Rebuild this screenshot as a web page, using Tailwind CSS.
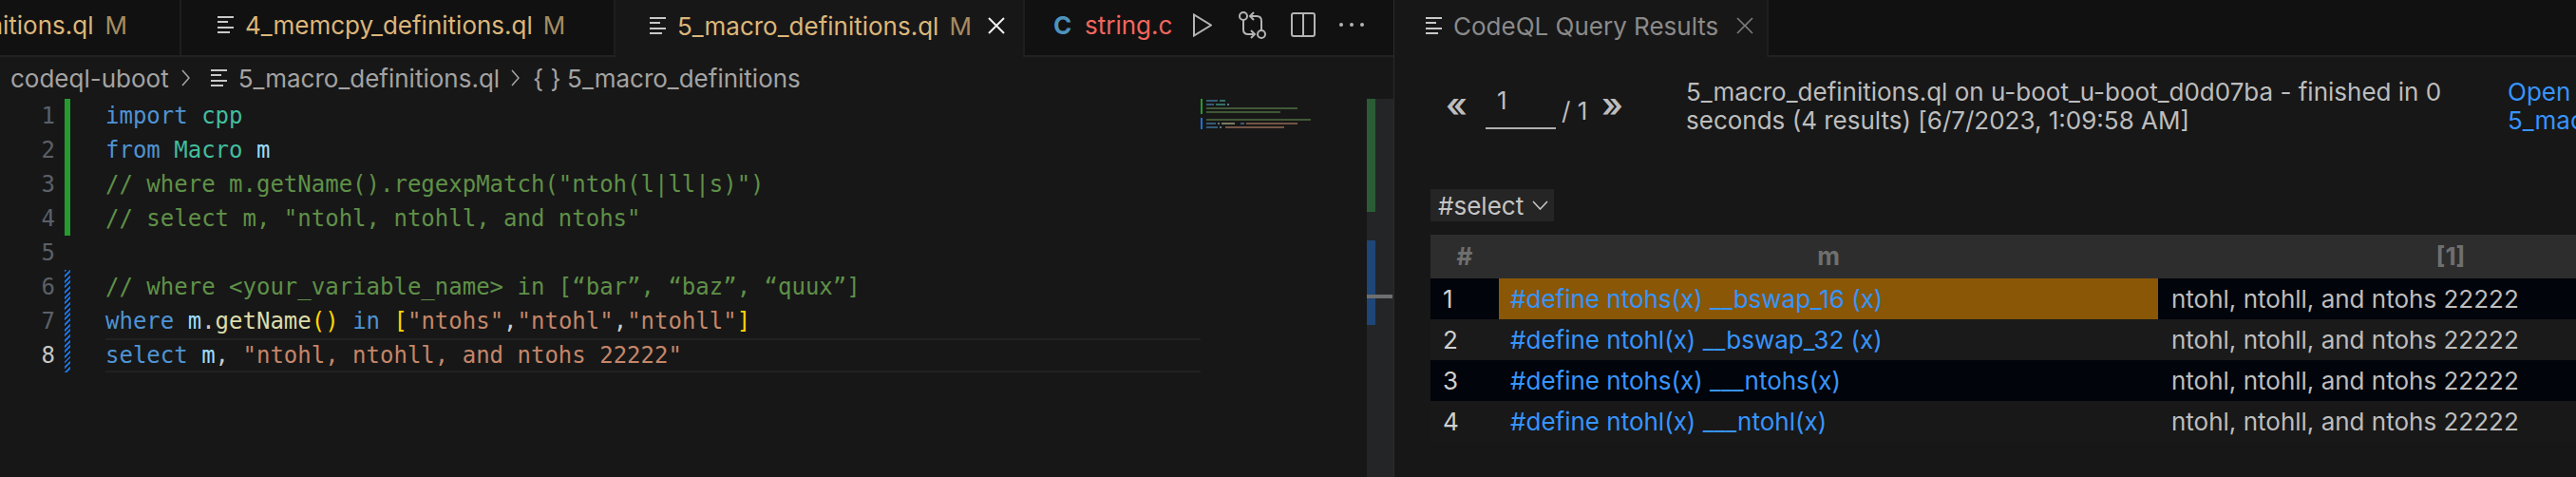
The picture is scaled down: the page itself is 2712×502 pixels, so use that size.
<!DOCTYPE html>
<html lang="en">
<head>
<meta charset="UTF-8">
<title>CodeQL Query Results</title>
<script src="https://cdn.jsdelivr.net/npm/@tailwindcss/browser@4"></script>
</head>
<body class="bg-[#171717] overflow-hidden">
<div class="flex w-[2712px] h-[502px] overflow-hidden font-['Inter','Noto_Sans',sans-serif] text-[26px] whitespace-nowrap antialiased">

  <!-- editor group -->
  <div class="flex flex-col w-[1467px] shrink-0">
    <!-- tabs -->
    <div class="flex h-[60px] shrink-0 bg-[#111111] border-b-2 border-[#222222] text-[#dcb67a]">
      <div class="flex items-center justify-end w-[191px] pr-[55px] pb-[6px] border-r-2 border-[#1e1e1e]">
        <span>nitions.ql</span><span class="ml-[12px] text-[#a58c62]">M</span>
      </div>
      <div class="flex items-center w-[457px] pl-[38px] pb-[6px] border-r-2 border-[#1e1e1e]">
        <svg class="w-[17px] h-[18px] shrink-0" viewBox="0 0 17 18" fill="#c8c8c8"><rect y="0" width="17" height="2"/><rect y="5" width="11" height="2"/><rect y="11" width="17" height="2"/><rect y="16" width="13" height="2"/></svg>
        <span class="ml-[12px]">4_memcpy_definitions.ql</span><span class="ml-[11px] text-[#a58c62]">M</span>
      </div>
      <div class="flex items-center w-[429px] h-[60px] pl-[36px] pb-[6px] bg-[#171717]">
        <svg class="w-[17px] h-[18px] shrink-0" viewBox="0 0 17 18" fill="#c8c8c8"><rect y="0" width="17" height="2"/><rect y="5" width="11" height="2"/><rect y="11" width="17" height="2"/><rect y="16" width="13" height="2"/></svg>
        <span class="ml-[12px]">5_macro_definitions.ql</span><span class="ml-[11px] text-[#a58c62]">M</span>
        <svg class="w-[18px] h-[18px] ml-[17px] shrink-0" viewBox="0 0 18 18" stroke="#f0f0f0" stroke-width="2" fill="none"><path d="M1 1l16 16M17 1L1 17"/></svg>
      </div>
      <div class="flex items-center flex-1 pl-[30px] pb-[6px] border-l-2 border-[#1e1e1e]">
        <span class="w-[33px] font-bold text-[#4d93bd]">C</span>
        <span class="text-[#f0675f]">string.c</span>
        <svg class="w-[20px] h-[25px] ml-[22px] shrink-0" viewBox="0 0 20 25" stroke="#b4b4b4" stroke-width="2" fill="none"><path d="M1 1.5v22l18-11z"/></svg>
        <svg class="w-[29px] h-[29px] ml-[28px] shrink-0" viewBox="0 0 29 29" stroke="#b4b4b4" stroke-width="2" fill="none"><circle cx="5" cy="5" r="4"/><circle cx="24" cy="24" r="4"/><path d="M5 9v10q0 5 5 5h6M13 20l4 4-4 4M24 20V10q0-5-5-5h-6M16 1l-4 4 4 4"/></svg>
        <svg class="w-[26px] h-[26px] ml-[26px] shrink-0" viewBox="0 0 26 26" stroke="#b4b4b4" stroke-width="2" fill="none"><rect x="1" y="1" width="24" height="24" rx="2"/><path d="M13 1v24"/></svg>
        <svg class="w-[26px] h-[4px] ml-[25px] shrink-0" viewBox="0 0 26 4" fill="#b4b4b4"><circle cx="2" cy="2" r="2"/><circle cx="13" cy="2" r="2"/><circle cx="24" cy="2" r="2"/></svg>
      </div>
    </div>

    <!-- breadcrumbs -->
    <div class="flex items-center h-[44px] shrink-0 pl-[11px] text-[#a3a3a3]">
      <span>codeql-uboot</span>
      <svg class="w-[9px] h-[18px] ml-[13px] shrink-0" viewBox="0 0 9 18" stroke="#a3a3a3" stroke-width="1.6" fill="none"><path d="M1 1l7 8-7 8"/></svg>
      <svg class="w-[17px] h-[18px] ml-[22px] shrink-0" viewBox="0 0 17 18" fill="#c8c8c8"><rect y="0" width="17" height="2"/><rect y="5" width="11" height="2"/><rect y="11" width="17" height="2"/><rect y="16" width="13" height="2"/></svg>
      <span class="ml-[12px]">5_macro_definitions.ql</span>
      <svg class="w-[9px] h-[18px] ml-[12px] shrink-0" viewBox="0 0 9 18" stroke="#a3a3a3" stroke-width="1.6" fill="none"><path d="M1 1l7 8-7 8"/></svg>
      <span class="ml-[14px] w-[36px]">{ }</span>
      <span>5_macro_definitions</span>
    </div>

    <!-- code area -->
    <div class="flex flex-1">
      <div class="relative w-[111px] shrink-0 text-right font-['DejaVu_Sans_Mono',monospace] text-[24px] leading-[36px] text-[#5b6068]">
        <div class="w-[58px]">1</div>
        <div class="w-[58px]">2</div>
        <div class="w-[58px]">3</div>
        <div class="w-[58px]">4</div>
        <div class="w-[58px]">5</div>
        <div class="w-[58px]">6</div>
        <div class="w-[58px]">7</div>
        <div class="w-[58px] text-[#c6c6c6]">8</div>
        <div class="absolute left-[68px] top-0 w-[6px] h-[144px] bg-[#259a2e]"></div>
        <div class="absolute left-[68px] top-[180px] w-[6px] h-[108px] bg-[repeating-linear-gradient(135deg,#1c6fd8_0px,#1c6fd8_2px,#171717_2px,#171717_4px)]"></div>
      </div>
      <div class="w-[1153px] shrink-0 font-['DejaVu_Sans_Mono',monospace] text-[24px] leading-[36px] text-[#cccccc]">
        <div class="h-[36px]"><span class="text-[#4f93d3]">import</span> <span class="text-[#42bd9f]">cpp</span></div>
        <div class="h-[36px]"><span class="text-[#4f93d3]">from</span> <span class="text-[#42bd9f]">Macro</span> <span class="text-[#9cdcfe]">m</span></div>
        <div class="h-[36px] text-[#5f9048]">// where m.getName().regexpMatch("ntoh(l|ll|s)")</div>
        <div class="h-[36px] text-[#5f9048]">// select m, "ntohl, ntohll, and ntohs"</div>
        <div class="h-[36px]"></div>
        <div class="h-[36px] text-[#5f9048]">// where &lt;your_variable_name&gt; in [“bar”, “baz”, “quux”]</div>
        <div class="h-[36px]"><span class="text-[#4f93d3]">where</span> <span class="text-[#9cdcfe]">m</span>.<span class="text-[#dcdcaa]">getName</span><span class="text-[#ffd700]">()</span> <span class="text-[#4f93d3]">in</span> <span class="text-[#ffd700]">[</span><span class="text-[#c4866a]">"ntohs"</span>,<span class="text-[#c4866a]">"ntohl"</span>,<span class="text-[#c4866a]">"ntohll"</span><span class="text-[#ffd700]">]</span></div>
        <div class="h-[36px] border-y-2 border-[#212121] leading-[32px]"><span class="text-[#4f93d3]">select</span> <span class="text-[#9cdcfe]">m</span>, <span class="text-[#c4866a]">"ntohl, ntohll, and ntohs 22222"</span></div>
      </div>
      <!-- minimap -->
      <svg class="w-[175px] h-[40px] shrink-0" viewBox="0 0 175 40">
        <rect x="0" y="0" width="2" height="16" fill="#259a2e"/>
        <rect x="0" y="20" width="2" height="12" fill="#1c6fd8"/>
        <g opacity=".5">
          <rect x="6" y="1" width="12" height="2" fill="#569cd6"/><rect x="20" y="1" width="6" height="2" fill="#4ec9b0"/>
          <rect x="6" y="5" width="8" height="2" fill="#569cd6"/><rect x="16" y="5" width="10" height="2" fill="#4ec9b0"/><rect x="28" y="5" width="2" height="2" fill="#9cdcfe"/>
          <rect x="6" y="9" width="96" height="2" fill="#6a9955"/>
          <rect x="6" y="13" width="78" height="2" fill="#6a9955"/>
          <rect x="6" y="21" width="110" height="2" fill="#6a9955"/>
          <rect x="6" y="25" width="10" height="2" fill="#569cd6"/><rect x="18" y="25" width="2" height="2" fill="#9cdcfe"/><rect x="22" y="25" width="14" height="2" fill="#dcdcaa"/><rect x="42" y="25" width="4" height="2" fill="#569cd6"/><rect x="48" y="25" width="54" height="2" fill="#ce9178"/>
          <rect x="6" y="29" width="12" height="2" fill="#569cd6"/><rect x="20" y="29" width="2" height="2" fill="#9cdcfe"/><rect x="26" y="29" width="62" height="2" fill="#ce9178"/>
        </g>
      </svg>
      <!-- overview ruler -->
      <div class="relative flex-1 bg-[#242527]">
        <div class="absolute left-0 top-0 w-[9px] h-[119px] bg-[#2b5c36]"></div>
        <div class="absolute left-0 top-[149px] w-[9px] h-[89px] bg-[#1e4677]"></div>
        <div class="absolute left-0 top-[206px] w-[27px] h-[4px] bg-[#6f6f6f]"></div>
      </div>
    </div>
  </div>

  <!-- sash -->
  <div class="w-[1px] shrink-0 bg-[#2b2b2b]"></div>

  <!-- results panel -->
  <div class="flex flex-col flex-1 min-w-0">
    <div class="flex h-[60px] shrink-0 bg-[#111111] border-b-2 border-[#222222]">
      <div class="flex items-center w-[394px] h-[60px] pl-[33px] pb-[6px] bg-[#171717] border-r-2 border-[#1e1e1e] text-[#8a8a8a]">
        <svg class="w-[17px] h-[18px] shrink-0" viewBox="0 0 17 18" fill="#c8c8c8"><rect y="0" width="17" height="2"/><rect y="5" width="11" height="2"/><rect y="11" width="17" height="2"/><rect y="16" width="13" height="2"/></svg>
        <span class="ml-[12px]">CodeQL Query Results</span>
        <svg class="w-[18px] h-[18px] ml-[19px] shrink-0" viewBox="0 0 18 18" stroke="#7c7c7c" stroke-width="1.6" fill="none"><path d="M1 1l7.999 8 8-8M17 17L9 9l-8 8"/></svg>
      </div>
    </div>

    <div class="flex h-[139px] shrink-0 text-[#bdbdbd]">
      <div class="flex items-start w-[307px] pl-[54px] pt-[30px] shrink-0">
        <span class="w-[42px] text-[36px] leading-[40px] font-semibold">«</span>
        <span class="w-[74px] h-[45px] border-b-2 border-[#b0b0b0] pl-[12px] mt-[1px] leading-[30px]">1</span>
        <span class="ml-[6px] mt-[7px] w-[42px]">/ 1</span>
        <span class="text-[36px] leading-[40px] font-semibold">»</span>
      </div>
      <div class="w-[865px] pt-[22px] shrink-0 leading-[30px]">
        <div>5_macro_definitions.ql on u-boot_u-boot_d0d07ba - finished in 0</div>
        <div>seconds (4 results) [6/7/2023, 1:09:58 AM]</div>
      </div>
      <div class="pt-[22px] leading-[30px] text-[#3794ff]">
        <div>Open</div>
        <div>5_macro_definitions.ql</div>
      </div>
    </div>

    <div class="flex items-center w-[130px] h-[34px] ml-[38px] pl-[8px] shrink-0 bg-[#252525] text-[#c4c4c4]">
      <span class="w-[99px]">#select</span>
      <svg class="w-[17px] h-[10px] shrink-0" viewBox="0 0 17 10" stroke="#c4c4c4" stroke-width="1.6" fill="none"><path d="M1 1l7.5 8L16 1"/></svg>
    </div>

    <!-- result table -->
    <div class="grid grid-cols-[72px_694px_616px] grid-rows-[46px_43px_43px_43px_43px] ml-[38px] mt-[14px] items-center text-[#bdbdbd]">
      <div class="flex h-full items-center justify-center bg-[#2d2d2d] pb-[2px] font-bold text-[#6f6f6f]">#</div>
      <div class="flex h-full items-center justify-center bg-[#2d2d2d] pb-[2px] font-bold text-[#6f6f6f]">m</div>
      <div class="flex h-full items-center justify-center bg-[#2d2d2d] pb-[2px] font-bold text-[#6f6f6f]">[1]</div>

      <div class="flex h-full items-center pl-[13px] bg-[#01040a] text-[#d0d0d0]">1</div>
      <div class="flex h-full items-center pl-[12px] bg-[#8a5706] text-[#3794ff]">#define ntohs(x) __bswap_16 (x)</div>
      <div class="flex h-full items-center pl-[14px] bg-[#01040a]">ntohl, ntohll, and ntohs 22222</div>

      <div class="flex h-full items-center pl-[13px] bg-[#1a1a1a] text-[#d0d0d0]">2</div>
      <div class="flex h-full items-center pl-[12px] bg-[#1a1a1a] text-[#3794ff]">#define ntohl(x) __bswap_32 (x)</div>
      <div class="flex h-full items-center pl-[14px] bg-[#1a1a1a]">ntohl, ntohll, and ntohs 22222</div>

      <div class="flex h-full items-center pl-[13px] bg-[#01040a] text-[#d0d0d0]">3</div>
      <div class="flex h-full items-center pl-[12px] bg-[#01040a] text-[#3794ff]">#define ntohs(x) ___ntohs(x)</div>
      <div class="flex h-full items-center pl-[14px] bg-[#01040a]">ntohl, ntohll, and ntohs 22222</div>

      <div class="flex h-full items-center pl-[13px] bg-[#181818] text-[#d0d0d0]">4</div>
      <div class="flex h-full items-center pl-[12px] bg-[#181818] text-[#3794ff]">#define ntohl(x) ___ntohl(x)</div>
      <div class="flex h-full items-center pl-[14px] bg-[#181818]">ntohl, ntohll, and ntohs 22222</div>
    </div>
  </div>
</div>
</body>
</html>
